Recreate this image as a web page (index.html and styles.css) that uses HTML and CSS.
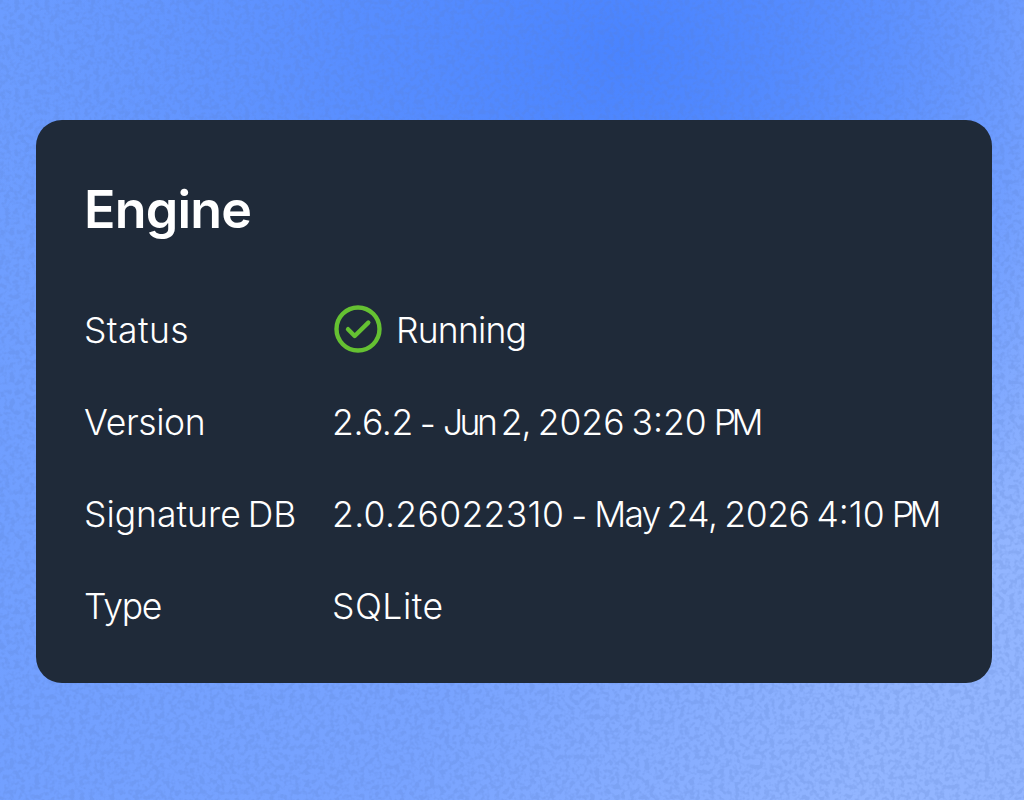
FILE: index.html
```html
<!DOCTYPE html>
<html lang="en">
<head>
<meta charset="utf-8">
<title>Engine</title>
<link rel="stylesheet" href="styles.css">
</head>
<body>
<svg class="grain" width="1024" height="800" aria-hidden="true">
  <filter id="grain" x="0" y="0" width="100%" height="100%" color-interpolation-filters="sRGB">
    <feTurbulence type="fractalNoise" baseFrequency="0.2" numOctaves="2" seed="4"/>
    <feColorMatrix values="0 0 0 0 0.36  0 0 0 0 0.5  0 0 0 0 0.8  5 0 0 0 -2.2"/>
  </filter>
  <rect width="1024" height="800" filter="url(#grain)"/>
</svg>
<main class="card">
  <h1 class="title">Engine</h1>
  <dl class="details">
    <dt class="status-label">Status</dt>
    <dd class="status"><svg class="check" viewBox="0 0 48 48"><circle cx="24" cy="24" r="21.5"/><path d="M14 24.2L20.7 31L34.3 17.6"/></svg><span class="running">Running</span></dd>
    <dt class="version-label">Version</dt>
    <dd class="version"><span class="number">2.6.2</span> <span class="dash">-</span> <span class="jun">Jun</span> <span class="day">2,</span> 2026 3:20 <span class="meridiem">PM</span></dd>
    <dt class="signature-label">Signature DB</dt>
    <dd class="signature"><span class="build">2.0.26022310</span> <span class="dash">-</span> <span class="may">May</span> <span class="date">24, 2026</span> 4:10 <span class="meridiem">PM</span></dd>
    <dt class="type-label">Type</dt>
    <dd class="type">SQLite</dd>
  </dl>
</main>
</body>
</html>
```
FILE: styles.css
```css
* { box-sizing: border-box; }
body {
  margin: 0;
  height: 800px;
  overflow: hidden;
  padding: 120px 32px 117px 36px;
  font-family: Inter, "Liberation Sans", sans-serif;
  color: #fff;
  background:
    radial-gradient(ellipse 640px 620px at 620px 50px, #4a84ff 0%, rgba(74,132,255,.65) 42%, rgba(74,132,255,0) 100%),
    linear-gradient(115deg, #6d9dff 0%, #78a3ff 55%, #92b5ff 88%);
}
.grain { position: absolute; inset: 0; opacity: .2; }
.card {
  position: relative;
  height: 563px;
  padding: 48px;
  border-radius: 26px;
  background: #1f2a39;
}
.title {
  margin: 0;
  height: 84px;
  line-height: 84px;
  font-size: 52px;
  font-weight: 600;
  letter-spacing: -.8px;
}
.details {
  margin: 33px 0 0;
  display: grid;
  grid-template-columns: 248px 1fr;
  grid-auto-rows: 92px;
  align-items: center;
  font-size: 35.5px;
  font-weight: 300;
  line-height: 48px;
  white-space: nowrap;
  word-spacing: -3px;
}
dd { margin: 0; }
.status-label { letter-spacing: .4px; }
.version-label { letter-spacing: -.4px; }
.running { letter-spacing: -.8px; }
.type-label { letter-spacing: -1.2px; }
.type { letter-spacing: .5px; }
.number { letter-spacing: -.4px; }
.build { letter-spacing: .35px; }
.dash { line-height: 0; vertical-align: -2px; }
.jun { letter-spacing: -3.5px; margin-right: -.5px; }
.day { letter-spacing: -1px; }
.may { letter-spacing: -1.8px; }
.date { letter-spacing: -.4px; }
.meridiem { letter-spacing: -4.5px; }
.status { display: flex; align-items: center; gap: 14px; padding-left: 2px; }
.check {
  width: 48px;
  height: 48px;
  margin-top: -4px;
  fill: none;
  stroke: #65c132;
  stroke-width: 4.4;
  stroke-linecap: round;
  stroke-linejoin: round;
}
```
